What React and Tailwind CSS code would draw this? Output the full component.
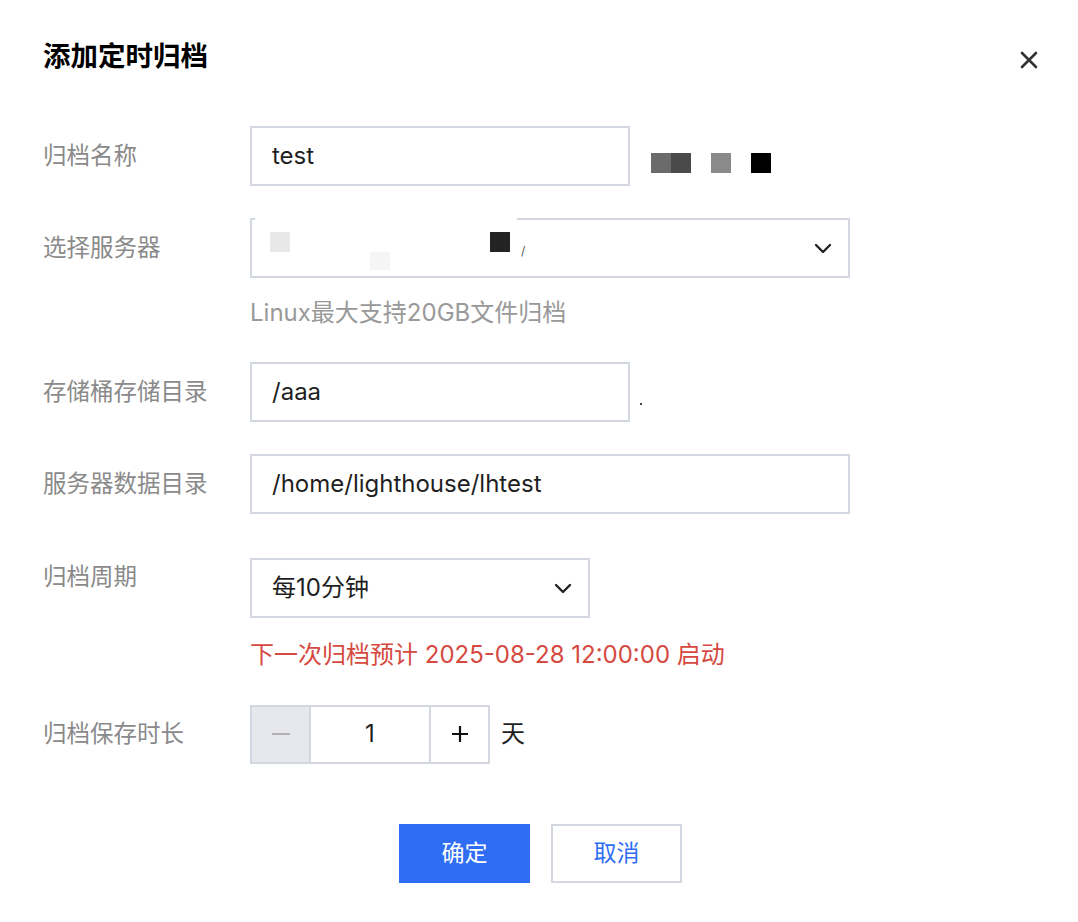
import React, { useState } from 'react'

const font = { fontFamily: 'Inter, "Noto Sans CJK SC", sans-serif' }

const Chevron = () => (
  <svg width="18" height="11" viewBox="0 0 18 11" fill="none">
    <path d="M2 2l7 7 7-7" stroke="#222" strokeWidth="2.4" strokeLinecap="round" strokeLinejoin="round" />
  </svg>
)

const Label = ({ children, className = 'h-[60px] flex items-center' }) => (
  <div className={`w-[207px] shrink-0 text-[23.5px] text-[#8a8a8a] ${className}`}>{children}</div>
)

const App = () => {
  const [days, setDays] = useState(1)

  return (
    <div className="w-[1078px] h-[922px] bg-white relative text-[#1f1f1f]" style={font}>
      {/* Header */}
      <div className="flex items-center justify-between pl-[43px] pr-[40px] pt-[38px]">
        <h1 className="text-[27.5px] font-bold text-black leading-[36px]">添加定时归档</h1>
        <button className="w-[18px] h-[18px] mt-[7px] flex items-center justify-center">
          <svg width="18" height="18" viewBox="0 0 18 18">
            <path d="M2 2l14 14M16 2L2 16" stroke="#333" strokeWidth="2.6" strokeLinecap="round" />
          </svg>
        </button>
      </div>

      <div className="pl-[43px] mt-[52px]">
        {/* 归档名称 */}
        <div className="flex items-center">
          <Label>归档名称</Label>
          <div className="w-[380px] h-[60px] border-2 border-[#d3d7e0] flex items-center px-[20px] text-[24px]">test</div>
          <div className="flex items-center ml-[21px] mt-[13px]">
            <span className="w-[20px] h-[20px] bg-[#6b6b6b]" />
            <span className="w-[20px] h-[20px] bg-[#4a4a4a]" />
            <span className="w-[20px] h-[20px] bg-[#8a8a8a] ml-[20px]" />
            <span className="w-[20px] h-[20px] bg-black ml-[20px]" />
          </div>
        </div>

        {/* 选择服务器 */}
        <div className="flex items-start mt-[32px]">
          <Label>选择服务器</Label>
          <div>
            <div className="relative w-[600px] h-[60px] border-2 border-[#d3d7e0] flex items-center justify-between pl-[20px] pr-[16px]">
              <div className="absolute -top-[8px] left-[3px] w-[262px] h-[12px] bg-white rounded-br-[6px]" />
              <div className="relative flex-1 h-full">
                <span className="absolute -left-[2px] top-[12px] w-[20px] h-[20px] bg-[#e8e8e8]" />
                <span className="absolute left-[98px] top-[32px] w-[20px] h-[18px] bg-[#f5f5f5]" />
                <span className="absolute left-[218px] top-[12px] w-[20px] h-[20px] bg-[#232323]" />
                <span className="absolute left-[249px] top-[22px] text-[12px] text-[#555]">/</span>
              </div>
              <Chevron />
            </div>
            <div className="mt-[21px] text-[24px] text-[#999] leading-[28px]">Linux最大支持20GB文件归档</div>
          </div>
        </div>

        {/* 存储桶存储目录 */}
        <div className="flex items-center mt-[35px]">
          <Label>存储桶存储目录</Label>
          <div className="w-[380px] h-[60px] border-2 border-[#d3d7e0] flex items-center px-[20px] text-[24px]">/aaa</div>
          <span className="w-[2px] h-[2px] bg-[#444] ml-[10px] mt-[24px]" />
        </div>

        {/* 服务器数据目录 */}
        <div className="flex items-center mt-[32px]">
          <Label>服务器数据目录</Label>
          <div className="w-[600px] h-[60px] border-2 border-[#d3d7e0] flex items-center px-[20px] text-[24px]">/home/lighthouse/lhtest</div>
        </div>

        {/* 归档周期 */}
        <div className="flex items-start mt-[44px]">
          <Label className="leading-[30px] pt-[4px]">归档周期</Label>
          <div>
            <div className="w-[340px] h-[60px] border-2 border-[#d3d7e0] flex items-center justify-between pl-[20px] pr-[16px] text-[24px]">
              <span>每10分钟</span>
              <Chevron />
            </div>
            <div className="mt-[22px] text-[24px] text-[#d54941] leading-[30px]">下一次归档预计 2025-08-28 12:00:00 启动</div>
          </div>
        </div>

        {/* 归档保存时长 */}
        <div className="flex items-center mt-[34px]">
          <Label>归档保存时长</Label>
          <div className="flex h-[59px] border-2 border-[#d3d7e0]">
            <button
              className="w-[59px] bg-[#e7e8ed] flex items-center justify-center border-r-2 border-[#d3d7e0]"
              onClick={() => setDays(Math.max(1, days - 1))}
            >
              <span className="w-[18px] h-[2px] bg-[#b3b3b3]" />
            </button>
            <div className="w-[118px] flex items-center justify-center text-[24px]">{days}</div>
            <button
              className="w-[59px] flex items-center justify-center border-l-2 border-[#d3d7e0]"
              onClick={() => setDays(days + 1)}
            >
              <svg width="18" height="18" viewBox="0 0 18 18">
                <path d="M9 1v16M1 9h16" stroke="#111" strokeWidth="2.2" />
              </svg>
            </button>
          </div>
          <span className="ml-[11px] text-[24px]">天</span>
        </div>
      </div>

      {/* Footer */}
      <div className="flex justify-center gap-[21px] mt-[60px] pl-[3px]">
        <button className="w-[131px] h-[59px] bg-[#2f6df5] text-white text-[23px]">确定</button>
        <button className="w-[131px] h-[59px] border-2 border-[#d3d7e0] text-[#2f6df5] text-[23px] bg-white">取消</button>
      </div>
    </div>
  )
}

export default App
